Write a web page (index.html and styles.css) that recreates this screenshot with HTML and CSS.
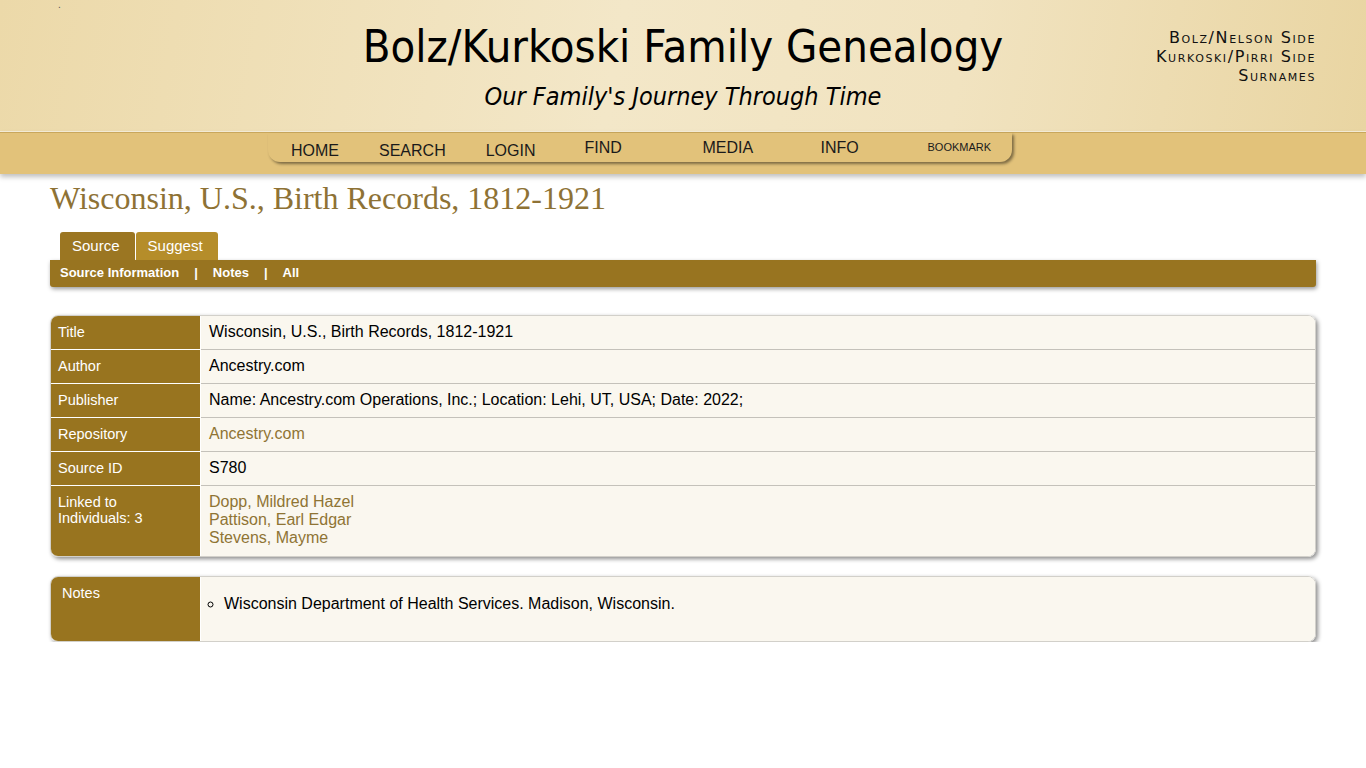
FILE: index.html
```html
<!DOCTYPE html>
<html lang="en">
<head>
    <meta charset="UTF-8">
    <title>Wisconsin, U.S., Birth Records, 1812-1921 - Bolz/Kurkoski Family Genealogy</title>
    <link rel="stylesheet" href="styles.css">
</head>
<body>
    <div class="header">
        <div class="dot">.</div>
        <div class="site-title">
            <h1>Bolz/Kurkoski Family Genealogy</h1>
            <div class="tagline">Our Family's Journey Through Time</div>
        </div>
        <div class="side-links">
            <a href="#">Bolz/Nelson Side</a>
            <a href="#">Kurkoski/Pirri Side</a>
            <a href="#">Surnames</a>
        </div>
    </div>

    <div class="navbar">
        <ul class="nav-pill">
            <li class="nav-main"><a href="#">HOME</a></li>
            <li class="nav-main"><a href="#">SEARCH</a></li>
            <li class="nav-main"><a href="#">LOGIN</a></li>
            <li class="nav-menu first"><a href="#">FIND</a></li>
            <li class="nav-menu"><a href="#">MEDIA</a></li>
            <li class="nav-menu short"><a href="#">INFO</a></li>
            <li class="nav-menu small"><a href="#">BOOKMARK</a></li>
        </ul>
    </div>

    <div class="content">
        <h2 class="page-title">Wisconsin, U.S., Birth Records, 1812-1921</h2>

        <div class="tabs">
            <a href="#" class="tab active">Source</a>
            <a href="#" class="tab">Suggest</a>
        </div>
        <div class="subbar">
            <a href="#">Source Information</a><span class="sep">|</span><a href="#">Notes</a><span class="sep">|</span><a href="#">All</a>
        </div>

        <div class="box">
            <table class="info-table">
                <tr>
                    <td class="label">Title</td>
                    <td class="value">Wisconsin, U.S., Birth Records, 1812-1921</td>
                </tr>
                <tr>
                    <td class="label">Author</td>
                    <td class="value">Ancestry.com</td>
                </tr>
                <tr>
                    <td class="label">Publisher</td>
                    <td class="value">Name: Ancestry.com Operations, Inc.; Location: Lehi, UT, USA; Date: 2022;</td>
                </tr>
                <tr>
                    <td class="label">Repository</td>
                    <td class="value"><a href="#">Ancestry.com</a></td>
                </tr>
                <tr>
                    <td class="label">Source ID</td>
                    <td class="value">S780</td>
                </tr>
                <tr class="last">
                    <td class="label">Linked to Individuals: 3</td>
                    <td class="value people">
                        <a href="#">Dopp, Mildred Hazel</a><br>
                        <a href="#">Pattison, Earl Edgar</a><br>
                        <a href="#">Stevens, Mayme</a>
                    </td>
                </tr>
            </table>
        </div>

        <div class="box">
            <table class="info-table">
                <tr class="last">
                    <td class="label notes-label">Notes</td>
                    <td class="value notes">
                        <ul>
                            <li>Wisconsin Department of Health Services. Madison, Wisconsin.</li>
                        </ul>
                    </td>
                </tr>
            </table>
        </div>
    </div>
</body>
</html>
```

FILE: styles.css
```css
body {
    margin: 0;
    font-family: "Liberation Sans", Arial, sans-serif;
    background: #fff;
    color: #000;
}
a {
    text-decoration: none;
}
.header {
    display: grid;
    grid-template-columns: 1fr auto 1fr;
    height: 131px;
    background: linear-gradient(100deg, #ecd9a9 0%, #f3e7c8 45%, #f1e3c0 70%, #e9d5a2 100%);
    border-bottom: 1px solid #f7efda;
}
.dot {
    font-size: 10px;
    line-height: 10px;
    padding: 0 0 0 58px;
    color: #555;
}
.site-title {
    text-align: center;
    padding-top: 21px;
}
.site-title h1 {
    margin: 0;
    font-family: "DejaVu Sans Condensed", "DejaVu Sans", sans-serif;
    font-weight: normal;
    font-size: 45px;
    line-height: 52px;
    color: #000;
}
.tagline {
    margin-top: 9px;
    font-family: "DejaVu Sans Condensed", "DejaVu Sans", sans-serif;
    font-style: italic;
    font-size: 25px;
    color: #000;
}
.side-links {
    display: flex;
    flex-direction: column;
    align-items: flex-end;
    padding: 28px 50px 0 0;
}
.side-links a {
    font-family: "DejaVu Sans", sans-serif;
    font-variant: small-caps;
    font-size: 16px;
    line-height: 19px;
    letter-spacing: 1.6px;
    color: #111;
}
.navbar {
    height: 41px;
    background: #e2c27a;
    border-top: 1px solid #c9a75c;
    box-shadow: 0 3px 5px rgba(0,0,0,0.25);
}
.nav-pill {
    list-style: none;
    margin: 0 auto 0 268px;
    padding: 0 0 0 3px;
    width: 741px;
    height: 29px;
    display: flex;
    background: #e2c27a;
    border-radius: 0 0 12px 12px;
    box-shadow: 2px 2px 3px rgba(0,0,0,0.45);
}
.nav-pill li {
    flex-shrink: 0;
}
.nav-pill a {
    color: #1a1a1a;
    font-size: 16px;
}
.nav-main {
    padding: 9px 20px 0;
}
.nav-menu {
    width: 118px;
    padding-top: 6px;
}
.nav-menu.first {
    margin-left: 29px;
}
.nav-menu.short {
    width: 107px;
}
.nav-menu.small {
    width: auto;
    padding-top: 4px;
}
.nav-menu.small a {
    font-size: 11px;
}
.content {
    padding: 0 50px;
}
.page-title {
    margin: 4px 0 14px;
    font-family: "Liberation Serif", "Times New Roman", serif;
    font-weight: normal;
    font-size: 32px;
    line-height: 40px;
    color: #8e7235;
}
.tabs {
    display: flex;
    padding-left: 10px;
    gap: 1px;
}
.tab {
    color: #fff;
    font-size: 15px;
    line-height: 28px;
    padding: 0 15px 0 12px;
    background: #b58d2a;
    border-radius: 3px 3px 0 0;
}
.tab.active {
    background: #9b7622;
}
.subbar {
    background: #987420;
    height: 27px;
    line-height: 26px;
    padding-left: 10px;
    border-radius: 0 0 3px 3px;
    box-shadow: 1px 2px 4px rgba(0,0,0,0.4);
    font-size: 13px;
    font-weight: bold;
}
.subbar a {
    color: #fff;
}
.sep {
    color: #fff;
    margin: 0 15px;
}
.box {
    margin-top: 28px;
    border: 1px solid #d2d0ca;
    border-radius: 8px;
    overflow: hidden;
    box-shadow: 2px 2px 4px rgba(0,0,0,0.45);
}
.box + .box {
    margin-top: 19px;
}
.info-table {
    width: 100%;
    border-collapse: collapse;
}
.info-table td {
    vertical-align: top;
    border-bottom: 1px solid #c4c1ba;
}
.info-table tr.last td {
    border-bottom: none;
}
.label {
    width: 120px;
    background: #98741f;
    color: #fff;
    font-size: 14.5px;
    line-height: 16px;
    padding: 8px 22px 9px 7px;
    border-right: 1px solid #fff;
    border-bottom-color: #fff !important;
}
.value {
    background: #faf7ef;
    font-size: 16px;
    line-height: 18px;
    padding: 7px 8px 8px 8px;
}
.value a {
    color: #8f7434;
}
.people {
    padding-top: 7px;
    padding-bottom: 9px;
}
.notes-label {
    width: 116px;
    padding-left: 11px;
    padding-right: 22px;
    height: 47px;
}
.notes ul {
    list-style: circle;
    margin: 11px 0 0;
    padding-left: 15px;
}
```
